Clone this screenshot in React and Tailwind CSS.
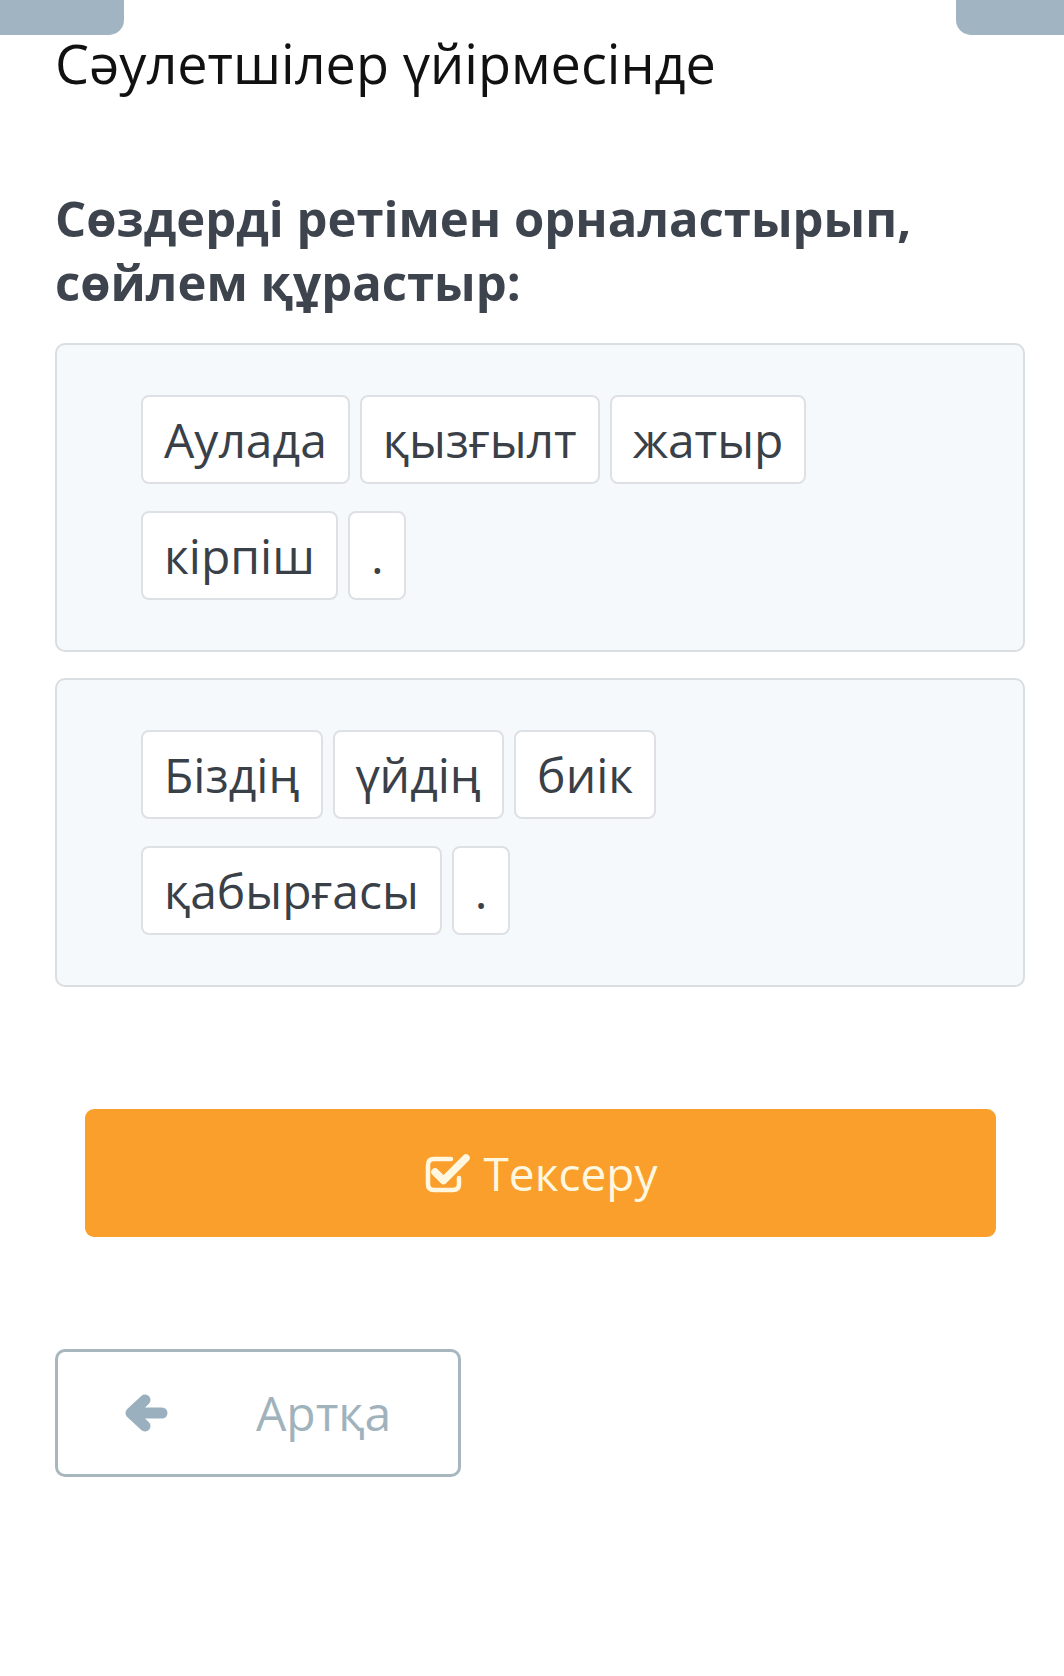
// Word-order exercise screen: arrange words into a sentence, check, go back.

const sentences = [
  [['Аулада', 'қызғылт', 'жатыр'], ['кірпіш', '.']],
  [['Біздің', 'үйдің', 'биік'], ['қабырғасы', '.']],
];

const CheckSquareIcon = () => (
  <svg width="48" height="42" viewBox="0 0 48 42" fill="none">
    <path
      d="M27 7 H10 Q4 7 4 13 V32 Q4 38 10 38 H29 Q35 38 35 32 V26"
      stroke="currentColor"
      strokeWidth="4.5"
      strokeLinecap="round"
    />
    <path
      d="M11 20 L19.5 28.5 L42 6"
      stroke="currentColor"
      strokeWidth="7.5"
      strokeLinecap="round"
      strokeLinejoin="round"
    />
  </svg>
);

const ArrowLeftIcon = () => (
  <svg width="44" height="38" viewBox="0 0 44 38" fill="none">
    <path
      d="M38 19 H9 M21 6 L7 19 L21 32"
      stroke="currentColor"
      strokeWidth="11"
      strokeLinecap="round"
      strokeLinejoin="round"
    />
  </svg>
);

const WordChip = ({ word }) => (
  <div className="h-[89px] flex items-center px-[21px] bg-white border-2 border-[#dde1e5] rounded-[8px] text-[48px] leading-none text-[#3a4048]">
    {word}
  </div>
);

const SentenceBox = ({ rows }) => (
  <div className="bg-[#f5f9fc] border-2 border-[#d9dee3] rounded-[10px] pl-[84px] pr-6 pt-[50px] pb-[50px] flex flex-col gap-[27px]">
    {rows.map((row, i) => (
      <div key={i} className="flex gap-[10px]">
        {row.map((w, j) => (
          <WordChip key={j} word={w} />
        ))}
      </div>
    ))}
  </div>
);

export default function App() {
  return (
    <div
      className="w-full min-h-[1676px] bg-white"
      style={{ fontFamily: '"Open Sans", "Noto Sans", sans-serif' }}
    >
      <div className="flex justify-between h-[35px]">
        <div className="w-[124px] h-full bg-[#a1b4c2] rounded-br-[15px]" />
        <div className="w-[108px] h-full bg-[#a1b4c2] rounded-bl-[15px]" />
      </div>

      <div className="pl-[55px] pr-[39px]">
        <h1 className="mt-[2px] text-[54px] leading-[52px] text-[#111111] font-normal">
          Сәулетшілер үйірмесінде
        </h1>

        <h2 className="mt-[97px] text-[49px] leading-[64px] font-bold text-[#3e444e]">
          Сөздерді ретімен орналастырып,
          <br />
          сөйлем құрастыр:
        </h2>

        <div className="mt-[29px] flex flex-col gap-[26px]">
          {sentences.map((rows, i) => (
            <SentenceBox key={i} rows={rows} />
          ))}
        </div>

        <button className="mt-[122px] mx-[30px] w-[911px] h-[128px] bg-[#fa9e2c] rounded-[9px] flex items-center justify-center gap-[12px] text-[#fff7df]">
          <CheckSquareIcon />
          <span className="text-[46px] leading-none">Тексеру</span>
        </button>

        <button className="mt-[112px] w-[406px] h-[128px] border-[3px] border-[#a8b7be] rounded-[10px] flex items-center pl-[66px] text-[#a0b3bd]">
          <span className="text-[#9ab0be]">
            <ArrowLeftIcon />
          </span>
          <span className="ml-[88px] text-[48px] leading-none">Артқа</span>
        </button>
      </div>
    </div>
  );
}
